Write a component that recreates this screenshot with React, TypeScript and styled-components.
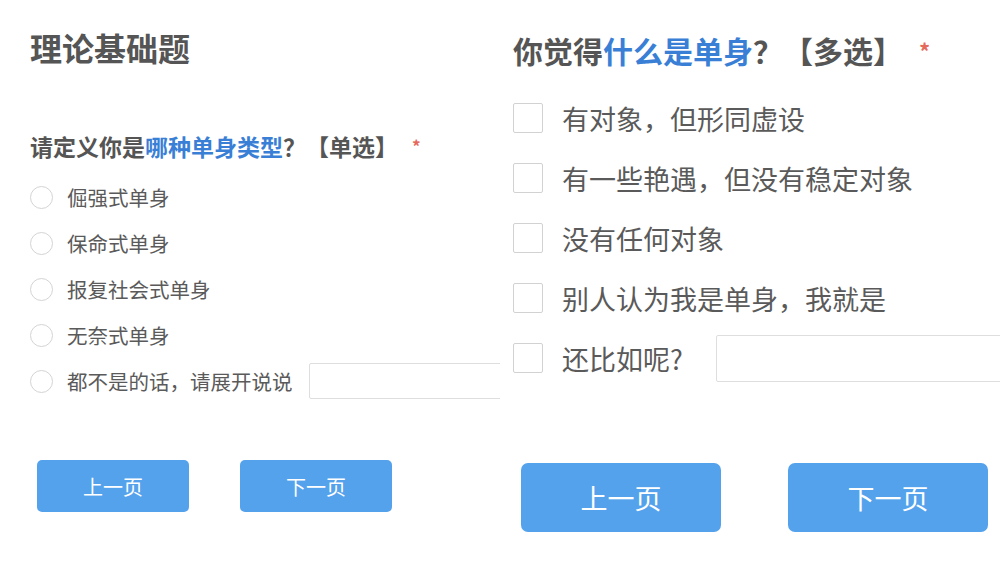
import React from 'react'
import styled, { createGlobalStyle } from 'styled-components'

type Option = { label: string; withInput?: boolean }

const GlobalStyle = createGlobalStyle`
  html, body {
    margin: 0;
    padding: 0;
    background: #ffffff;
  }
  body {
    font-family: "Noto Sans CJK SC", "Noto Sans", sans-serif;
    color: #555;
  }
`

const Page = styled.div`
  display: flex;
  flex-direction: row;
  width: 1000px;
  height: 562px;
  overflow: hidden;
  background: #fff;
`

const Panel = styled.div<{ $big?: boolean }>`
  width: 500px;
  flex-shrink: 0;
  overflow: hidden;
  display: flex;
  flex-direction: column;
  box-sizing: border-box;
  padding: ${p => (p.$big ? '30px 0 0 13px' : '28px 0 0 30px')};
`

const Title = styled.h1`
  margin: 0;
  font-size: 32px;
  line-height: 38px;
  font-weight: 700;
  color: #555;
`

const Question = styled.div<{ $big?: boolean }>`
  margin-top: ${p => (p.$big ? '0' : '65px')};
  font-size: ${p => (p.$big ? '30px' : '23px')};
  line-height: ${p => (p.$big ? '40px' : '30px')};
  font-weight: 700;
  color: #555;
  white-space: nowrap;
`

const Highlight = styled.span`
  color: #3a7fd6;
`

const Required = styled.span<{ $big?: boolean }>`
  color: #e46a5c;
  font-size: ${p => (p.$big ? '22px' : '17px')};
  vertical-align: top;
  margin-left: ${p => (p.$big ? '16px' : '14px')};
`

const OptionList = styled.div<{ $big?: boolean }>`
  display: flex;
  flex-direction: column;
  margin-top: ${p => (p.$big ? '18px' : '13px')};
`

const OptionRow = styled.label<{ $big?: boolean }>`
  display: flex;
  flex-direction: row;
  align-items: center;
  height: ${p => (p.$big ? '60px' : '46px')};
  font-size: ${p => (p.$big ? '27px' : '20.5px')};
  color: #5a5a5a;
  white-space: nowrap;
`

const Radio = styled.span`
  width: 21px;
  height: 21px;
  border: 1.5px solid #d4d4d4;
  border-radius: 50%;
  margin-right: 14px;
  flex-shrink: 0;
`

const Checkbox = styled.span`
  width: 28px;
  height: 28px;
  border: 1.5px solid #d2d2d2;
  border-radius: 2px;
  margin-right: 19px;
  flex-shrink: 0;
`

const TextInput = styled.input<{ $big?: boolean }>`
  flex-shrink: 0;
  box-sizing: border-box;
  width: 320px;
  height: ${p => (p.$big ? '47px' : '36px')};
  margin-left: ${p => (p.$big ? '33px' : '16px')};
  border: 1.5px solid #dedede;
  border-radius: 2px;
  background: #fff;
  outline: none;
`

const ButtonRow = styled.div<{ $big?: boolean }>`
  display: flex;
  flex-direction: row;
  gap: ${p => (p.$big ? '67px' : '51px')};
  margin-top: ${p => (p.$big ? '75px' : '56px')};
  padding-left: ${p => (p.$big ? '8px' : '7px')};
`

const Button = styled.button<{ $big?: boolean }>`
  width: ${p => (p.$big ? '200px' : '152px')};
  height: ${p => (p.$big ? '69px' : '52px')};
  border: none;
  border-radius: ${p => (p.$big ? '7px' : '5px')};
  background: #55a2ec;
  color: #fff;
  font-family: "Noto Sans CJK SC", sans-serif;
  font-size: ${p => (p.$big ? '27px' : '20px')};
  cursor: pointer;
`

const singleOptions: Option[] = [
  { label: '倔强式单身' },
  { label: '保命式单身' },
  { label: '报复社会式单身' },
  { label: '无奈式单身' },
  { label: '都不是的话，请展开说说', withInput: true },
]

const multiOptions: Option[] = [
  { label: '有对象，但形同虚设' },
  { label: '有一些艳遇，但没有稳定对象' },
  { label: '没有任何对象' },
  { label: '别人认为我是单身，我就是' },
  { label: '还比如呢?', withInput: true },
]

export default function App() {
  return (
    <Page>
      <GlobalStyle />
      <Panel>
        <Title>理论基础题</Title>
        <Question>
          请定义你是<Highlight>哪种单身类型</Highlight>？【单选】
          <Required>*</Required>
        </Question>
        <OptionList>
          {singleOptions.map(o => (
            <OptionRow key={o.label}>
              <Radio />
              {o.label}
              {o.withInput && <TextInput />}
            </OptionRow>
          ))}
        </OptionList>
        <ButtonRow>
          <Button>上一页</Button>
          <Button>下一页</Button>
        </ButtonRow>
      </Panel>
      <Panel $big>
        <Question $big>
          你觉得<Highlight>什么是单身</Highlight>？【多选】
          <Required $big>*</Required>
        </Question>
        <OptionList $big>
          {multiOptions.map(o => (
            <OptionRow $big key={o.label}>
              <Checkbox />
              {o.label}
              {o.withInput && <TextInput $big />}
            </OptionRow>
          ))}
        </OptionList>
        <ButtonRow $big>
          <Button $big>上一页</Button>
          <Button $big>下一页</Button>
        </ButtonRow>
      </Panel>
    </Page>
  )
}
